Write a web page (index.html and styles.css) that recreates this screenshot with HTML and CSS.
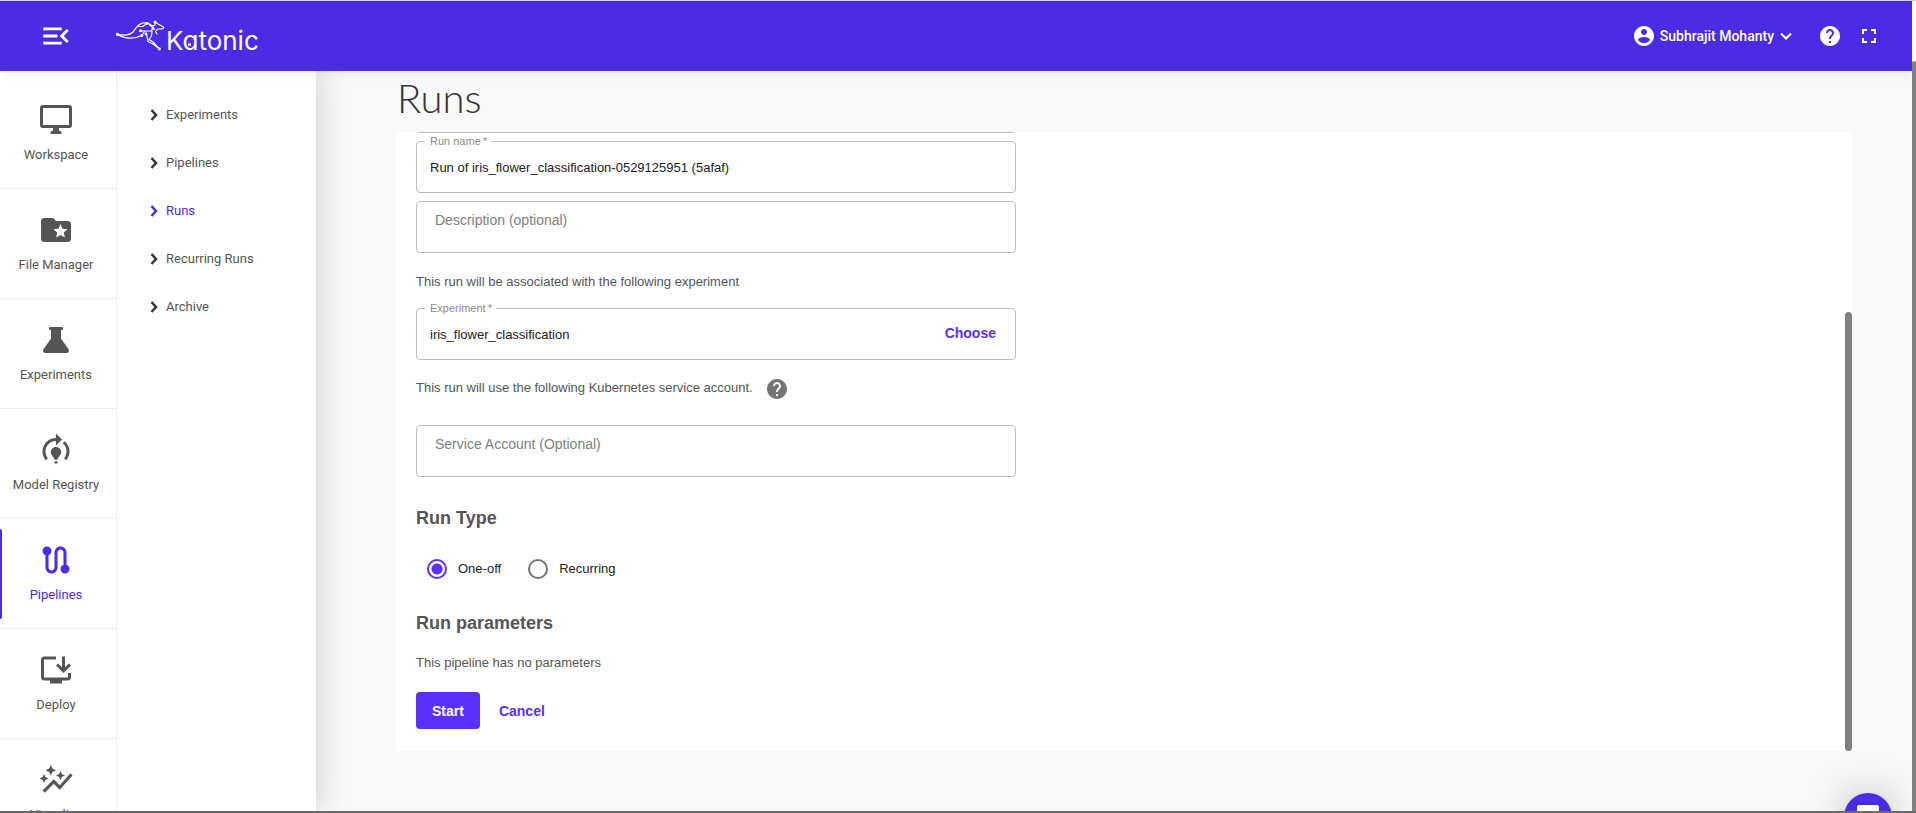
FILE: index.html
```html
<!DOCTYPE html>
<html lang="en">
<head>
<meta charset="utf-8">
<title>Katonic - Runs</title>
<link rel="stylesheet" href="styles.css">
</head>
<body>
<div class="app">
  <header class="topbar">
    <button class="icon-btn menu-btn" type="button" aria-label="Collapse menu">
      <svg width="34" height="34" viewBox="0 0 24 24" fill="currentColor"><path d="M3 18h13v-2H3v2zm0-5h10v-2H3v2zm0-7v2h13V6H3zm18 9.590L17.420 12 21 8.410 19.590 7l-5 5 5 5L21 15.590z"/></svg>
    </button>
    <a class="logo" href="#">
      <svg class="roo" width="50" height="32" viewBox="0 0 50 32" fill="none" stroke="currentColor" stroke-width="1.200" stroke-linejoin="round" stroke-linecap="round">
        <path d="M1.500 14.300C7 15.500 13 15.500 17 12c2.500-2.500 3-6.500 9.500-9 4-.5 7.500 1 9.500 3l3-1-.5-3.500 3.500 2.500 5.500 3c.5 1.500-1 2-3 2h-3l-2 2.500 1.500 2.500"/>
        <path d="M1.500 14.300C9 19.500 19 19 25.500 15.500M21.500 6.500h5l4.500-3M24.500 11l11-.2 1.500-3-3.500-3M36 6l2.500 3.500M26 15l3-4M36 11l-.5 5-2.500 3.500 4 2.500 6.500 7M30.500 14l1.500 7.500 5 2.500 6.500 5"/>
        <g fill="currentColor" stroke="none"><circle cx="1.500" cy="14.300" r="1.600"/><circle cx="31" cy="3.500" r="1.400"/><circle cx="24.500" cy="10.800" r="1.500"/><circle cx="25.800" cy="15.500" r="1.500"/><circle cx="39" cy="2" r="1.500"/><circle cx="37" cy="8" r="1.400"/><circle cx="30" cy="14" r="1.400"/><circle cx="43.500" cy="29" r="1.400"/></g>
      </svg>
      <span class="logo-text">K<span class="logo-a">a</span>tonic</span>
    </a>
    <button class="user" type="button">
      <svg width="24" height="24" viewBox="0 0 24 24" fill="currentColor"><path d="M12 2C6.480 2 2 6.480 2 12s4.480 10 10 10 10-4.480 10-10S17.520 2 12 2zm0 3c1.660 0 3 1.340 3 3s-1.340 3-3 3-3-1.340-3-3 1.340-3 3-3zm0 14.200c-2.500 0-4.710-1.280-6-3.220.03-1.990 4-3.080 6-3.080 1.990 0 5.970 1.090 6 3.080-1.290 1.940-3.500 3.220-6 3.220z"/></svg>
      <span>Subhrajit Mohanty</span>
      <svg width="12" height="12" viewBox="0 0 12 12" fill="none" stroke="currentColor" stroke-width="2"><path d="M1 3.500l5 5 5-5"/></svg>
    </button>
    <button class="icon-btn help-btn" type="button" aria-label="Help">
      <svg width="24" height="24" viewBox="0 0 24 24" fill="currentColor"><path d="M12 2C6.480 2 2 6.480 2 12s4.480 10 10 10 10-4.480 10-10S17.520 2 12 2zm1 17h-2v-2h2v2zm2.070-7.750l-.9.920C13.450 12.900 13 13.500 13 15h-2v-.5c0-1.100.45-2.100 1.170-2.830l1.240-1.260c.37-.36.59-.86.59-1.410 0-1.100-.9-2-2-2s-2 .9-2 2H8c0-2.210 1.790-4 4-4s4 1.790 4 4c0 .88-.36 1.680-.93 2.250z"/></svg>
    </button>
    <button class="icon-btn" type="button" aria-label="Full screen">
      <svg width="24" height="24" viewBox="0 0 24 24" fill="currentColor"><path d="M7 14H5v5h5v-2H7v-3zm-2-4h2V7h3V5H5v5zm12 7h-3v2h5v-5h-2v3zM14 5v2h3v3h2V5h-5z"/></svg>
    </button>
  </header>

  <div class="body">
    <nav class="rail" aria-label="Main">
      <a class="rail-item" href="#"><svg width="36" height="36" viewBox="0 0 36 36"><path fill="none" stroke="currentColor" stroke-width="3" d="M5 4.500h26a1.500 1.500 0 0 1 1.500 1.500v17a1.500 1.500 0 0 1-1.500 1.500H5A1.500 1.500 0 0 1 3.500 23V6A1.500 1.500 0 0 1 5 4.500z"/><path fill="currentColor" d="M15 25h6v4h1a1.500 1.500 0 0 1 1.500 1.500v1.500h-11v-1.500A1.500 1.500 0 0 1 14 29h1z"/></svg><span>Workspace</span></a>
      <a class="rail-item" href="#"><svg width="36" height="36" viewBox="0 0 24 24" fill="currentColor"><path d="M20 6h-8l-2-2H4c-1.100 0-1.990.9-1.990 2L2 18c0 1.100.9 2 2 2h16c1.100 0 2-.9 2-2V8c0-1.100-.9-2-2-2zm-2.060 11L15 15.280 12.060 17l.78-3.330-2.590-2.240 3.410-.29L15 8l1.340 3.140 3.410.29-2.590 2.240.78 3.330z"/></svg><span>File Manager</span></a>
      <a class="rail-item" href="#"><svg width="36" height="36" viewBox="0 0 36 36" fill="currentColor"><path d="M12 5h12a1 1 0 0 1 1 1v1a1 1 0 0 1-1 1h-1v8.500l7.400 10.500c1.300 2 .2 4-1.900 4h-21c-2.100 0-3.200-2-1.900-4L13 16.500V8h-1a1 1 0 0 1-1-1V6a1 1 0 0 1 1-1z"/></svg><span>Experiments</span></a>
      <a class="rail-item" href="#"><svg width="36" height="36" viewBox="0 0 24 24" fill="currentColor"><path d="M15.500 13.500c0 2-2.500 3.500-2.500 5h-2c0-1.500-2.500-3-2.500-5 0-1.930 1.570-3.500 3.500-3.500s3.500 1.570 3.500 3.500zm-2.500 6h-2V21h2v-1.500zm6-6.500c0 1.680-.59 3.210-1.580 4.420l1.420 1.420C20.180 17.270 21 15.230 21 13c0-2.740-1.230-5.190-3.160-6.840l-1.420 1.420C17.990 8.860 19 10.820 19 13zm-3-8l-4-4v3c-4.970 0-9 4.030-9 9 0 2.230.82 4.270 2.160 5.840l1.420-1.420C5.590 16.210 5 14.680 5 13c0-3.860 3.140-7 7-7v3l4-4z"/></svg><span>Model Registry</span></a>
      <a class="rail-item active" href="#" aria-current="page"><svg width="36" height="36" viewBox="0 0 24 24" fill="currentColor"><path d="M19 15.180V7c0-2.210-1.790-4-4-4s-4 1.790-4 4v10c0 1.100-.9 2-2 2s-2-.9-2-2V8.820C8.160 8.400 9 7.300 9 6c0-1.660-1.340-3-3-3S3 4.340 3 6c0 1.300.84 2.400 2 2.820V17c0 2.210 1.790 4 4 4s4-1.790 4-4V7c0-1.100.9-2 2-2s2 .9 2 2v8.180c-1.160.41-2 1.510-2 2.820 0 1.660 1.340 3 3 3s3-1.340 3-3c0-1.300-.84-2.400-2-2.820z"/></svg><span>Pipelines</span></a>
      <a class="rail-item" href="#"><svg width="36" height="36" viewBox="0 0 24 24" fill="currentColor"><path d="M20 17H4V5h8V3H4c-1.100 0-2 .9-2 2v12c0 1.100.9 2 2 2h4v2h8v-2h4c1.100 0 2-.9 2-2v-3h-2v3z"/><path d="M17 14l5-5-1.410-1.410L18 10.170V3h-2v7.170l-2.590-2.580L12 9z"/></svg><span>Deploy</span></a>
      <a class="rail-item" href="#"><svg width="36" height="36" viewBox="0 0 24 24" fill="currentColor"><path d="M14.060 9.940L12 9l2.060-.94L15 6l.94 2.060L18 9l-2.060.94L15 12l-.94-2.060zM4 14l.94-2.060L7 11l-2.060-.94L4 8l-.94 2.060L1 11l2.060.94L4 14zm4.500-5l1.090-2.410L12 5.500 9.590 4.410 8.500 2 7.410 4.410 5 5.500l2.410 1.090L8.500 9zm-4 11.500l6-6.010 4 4L23 8.930l-1.410-1.410-7.090 7.970-4-4L3 19l1.500 1.500z"/></svg><span>Visualize</span></a>
    </nav>

    <nav class="submenu" aria-label="Pipelines">
      <a href="#"><svg width="9" height="14" viewBox="0 0 9 14"><path d="M1.500 3l4.500 5-4.500 5"/></svg><span>Experiments</span></a>
      <a href="#"><svg width="9" height="14" viewBox="0 0 9 14"><path d="M1.500 3l4.500 5-4.500 5"/></svg><span>Pipelines</span></a>
      <a href="#" class="active" aria-current="page"><svg width="9" height="14" viewBox="0 0 9 14"><path d="M1.500 3l4.500 5-4.500 5"/></svg><span>Runs</span></a>
      <a href="#"><svg width="9" height="14" viewBox="0 0 9 14"><path d="M1.500 3l4.500 5-4.500 5"/></svg><span>Recurring Runs</span></a>
      <a href="#"><svg width="9" height="14" viewBox="0 0 9 14"><path d="M1.500 3l4.500 5-4.500 5"/></svg><span>Archive</span></a>
    </nav>

    <main class="main">
      <h1>Runs</h1>
      <div class="panel">
        <form class="form">
          <div class="field scrolled"><input type="text" aria-label="Pipeline version"></div>
          <div class="field">
            <label for="run-name">Run name&thinsp;*</label>
            <input id="run-name" type="text" value="Run of iris_flower_classification-0529125951 (5afaf)">
          </div>
          <div class="field outlined"><input type="text" aria-label="Description (optional)" placeholder="Description (optional)"></div>
          <p class="note">This run will be associated with the following experiment</p>
          <div class="field">
            <label for="experiment">Experiment&thinsp;*</label>
            <input id="experiment" type="text" value="iris_flower_classification">
            <button class="text-btn" type="button">Choose</button>
          </div>
          <p class="note account-note"><span>This run will use the following Kubernetes service account.</span>
            <svg width="24" height="24" viewBox="0 0 24 24" fill="currentColor"><path d="M12 2C6.480 2 2 6.480 2 12s4.480 10 10 10 10-4.480 10-10S17.520 2 12 2zm1 17h-2v-2h2v2zm2.070-7.750l-.9.920C13.450 12.900 13 13.500 13 15h-2v-.5c0-1.100.45-2.100 1.170-2.830l1.240-1.260c.37-.36.59-.86.59-1.410 0-1.100-.9-2-2-2s-2 .9-2 2H8c0-2.210 1.790-4 4-4s4 1.790 4 4c0 .88-.36 1.680-.93 2.250z"/></svg>
          </p>
          <div class="field outlined"><input type="text" aria-label="Service Account (Optional)" placeholder="Service Account (Optional)"></div>
          <h2 id="run-type">Run Type</h2>
          <div class="radios" role="radiogroup" aria-labelledby="run-type">
            <label><input type="radio" name="type" checked>One-off</label>
            <label><input type="radio" name="type">Recurring</label>
          </div>
          <h2>Run parameters</h2>
          <p class="note params-note">This pipeline has no parameters</p>
          <div class="actions">
            <button class="primary" type="button">Start</button>
            <button class="text-btn" type="button">Cancel</button>
          </div>
        </form>
        <span class="panel-thumb"></span>
      </div>
    </main>
  </div>
  <button class="chat" type="button" aria-label="Open chat"><svg width="22" height="24" viewBox="0 0 22 24"><rect width="22" height="24" rx="2" fill="#fff"/></svg></button>
  <span class="page-track"><span class="page-thumb"></span></span>
</div>
</body>
</html>
```
FILE: styles.css
```css
* { box-sizing: border-box; }
body { margin: 0; font-family: Roboto, sans-serif; background: #f9f9f9; color: #555; }
a { color: inherit; text-decoration: none; }
button { font: inherit; color: inherit; background: none; border: 0; padding: 0; cursor: pointer; }
svg { display: block; flex: none; }

.app { position: relative; display: flex; flex-direction: column; height: 100vh; overflow: hidden; border-top: 1px solid #d5d3e3; border-bottom: 2px solid #6d6a6d; padding-right: 4px; }

.topbar { position: relative; z-index: 3; display: flex; align-items: center; flex: none; height: 70px; padding: 0 31px 0 39px; background: #4b2be3; color: #fff; box-shadow: 0 2px 12px rgba(0, 0, 0, .07); }
.logo { display: flex; align-items: center; margin: 0 auto 0 43px; }
.logo-text { font: 400 26px/32px Inter, sans-serif; font-feature-settings: "cv11"; padding-top: 10px; }
.logo-a { position: relative; }
.logo-a::after { content: ""; position: absolute; left: 6px; bottom: 10px; width: 3px; height: 3px; border-radius: 50%; background: #fff; }
.user { display: flex; align-items: center; gap: 4px; font-size: 14px; font-weight: 500; }
.user svg:last-child { margin-left: 2px; }
.help-btn { margin: 0 15px 0 26px; }

.body { display: flex; flex: 1; min-height: 0; }
.rail { position: relative; z-index: 2; flex: none; width: 117px; padding-top: 8px; background: #fff; border-right: 1px solid #eee; overflow: hidden; }
.rail-item { position: relative; display: flex; flex-direction: column; align-items: center; height: 110px; padding: 23px 4px 0 0; gap: 9px; border-bottom: 1px solid #eee; font-size: 13px; line-height: 16px; }
.rail-item.active, .submenu .active { color: #4b2be3; }
.rail-item.active::before { content: ""; position: absolute; left: 0; top: 10px; bottom: 9px; width: 2px; border-radius: 0 2px 2px 0; background: currentColor; }

.submenu { position: relative; z-index: 1; flex: none; width: 199px; padding: 19px 0 0 33px; background: #fff; box-shadow: 0 0 30px rgba(0, 0, 0, .2); font-size: 13px; }
.submenu a { display: flex; align-items: center; gap: 7px; height: 48px; }
.submenu path { fill: none; stroke: #333; stroke-width: 2.500; }
.submenu .active path { stroke: currentColor; }

.main { flex: 1; min-width: 0; padding: 0 60px 0 80px; }
h1 { margin: 0; padding: 3px 0 0 1px; height: 61px; font: 300 40px/48px Lato, sans-serif; color: #333; }
.panel { position: relative; overflow: hidden; background: #fff; font-family: "Liberation Sans", sans-serif; }
.panel-thumb { position: absolute; right: 0; top: 180px; bottom: 0; width: 7px; border-radius: 4px; background: #808080; }
.form { max-width: 640px; padding: 0 20px 22px; }
.field { position: relative; display: flex; align-items: center; height: 52px; margin-bottom: 8px; border: 1px solid #bdbdbd; border-radius: 4px; }
.field.scrolled { margin-top: -51px; }
.field label { position: absolute; left: 8px; top: -8px; padding: 0 4px 0 5px; background: #fff; color: #8a8a8a; font-size: 11px; line-height: 14px; }
.field input { flex: 1; min-width: 0; height: 100%; padding: 0 13px; border: 0; background: none; outline: 0; font: 13px/16px "Liberation Sans", sans-serif; color: #212121; }
.field.outlined input { padding: 0 18px 14px; font-size: 14px; }
.field input::placeholder { color: #808080; opacity: 1; }
.text-btn { color: #5a30ff; font-size: 14px; font-weight: 700; line-height: 16px; }
.field .text-btn { margin-right: 19px; padding-bottom: 2px; }
.note { margin: 21px 0 18px; font-size: 13px; line-height: 16px; }
.account-note { display: flex; align-items: center; gap: 12px; margin: 17px 0 24px; }
.account-note span { padding-bottom: 2px; }
.account-note svg { color: #757575; }
h2 { margin: 0; font-size: 18px; line-height: 24px; font-weight: 700; }
.field + h2 { margin-top: 29px; }
.radios { display: flex; gap: 27px; margin: 28px 0 31px 11px; color: #212121; font-size: 13px; }
.radios label { display: flex; align-items: center; gap: 11px; line-height: 22px; }
.radios input { appearance: none; width: 20px; height: 20px; margin: 0; border: 2px solid #757575; border-radius: 50%; }
.radios input:checked { border-color: #5a30ff; background: radial-gradient(circle, #5a30ff 5px, transparent 6px); }
.params-note { margin: 20px 0 21px; }
.actions { display: flex; align-items: center; gap: 19px; }
.primary { height: 37px; padding: 0 16px; border-radius: 4px; background: #5a30ff; color: #fff; font-size: 14px; font-weight: 700; }

.chat { position: absolute; z-index: 4; right: 24px; bottom: -30px; display: grid; place-items: center; width: 48px; height: 48px; border-radius: 50%; background: #4b2be3; box-shadow: 0 0 40px rgba(0, 0, 0, .25); }
.page-track { position: absolute; z-index: 5; top: 0; right: 0; bottom: 0; width: 4px; padding-top: 60px; background: #f9f9f9; }
.page-thumb { display: block; height: 100%; background: #808080; border-radius: 2px 2px 0 0; }
```
